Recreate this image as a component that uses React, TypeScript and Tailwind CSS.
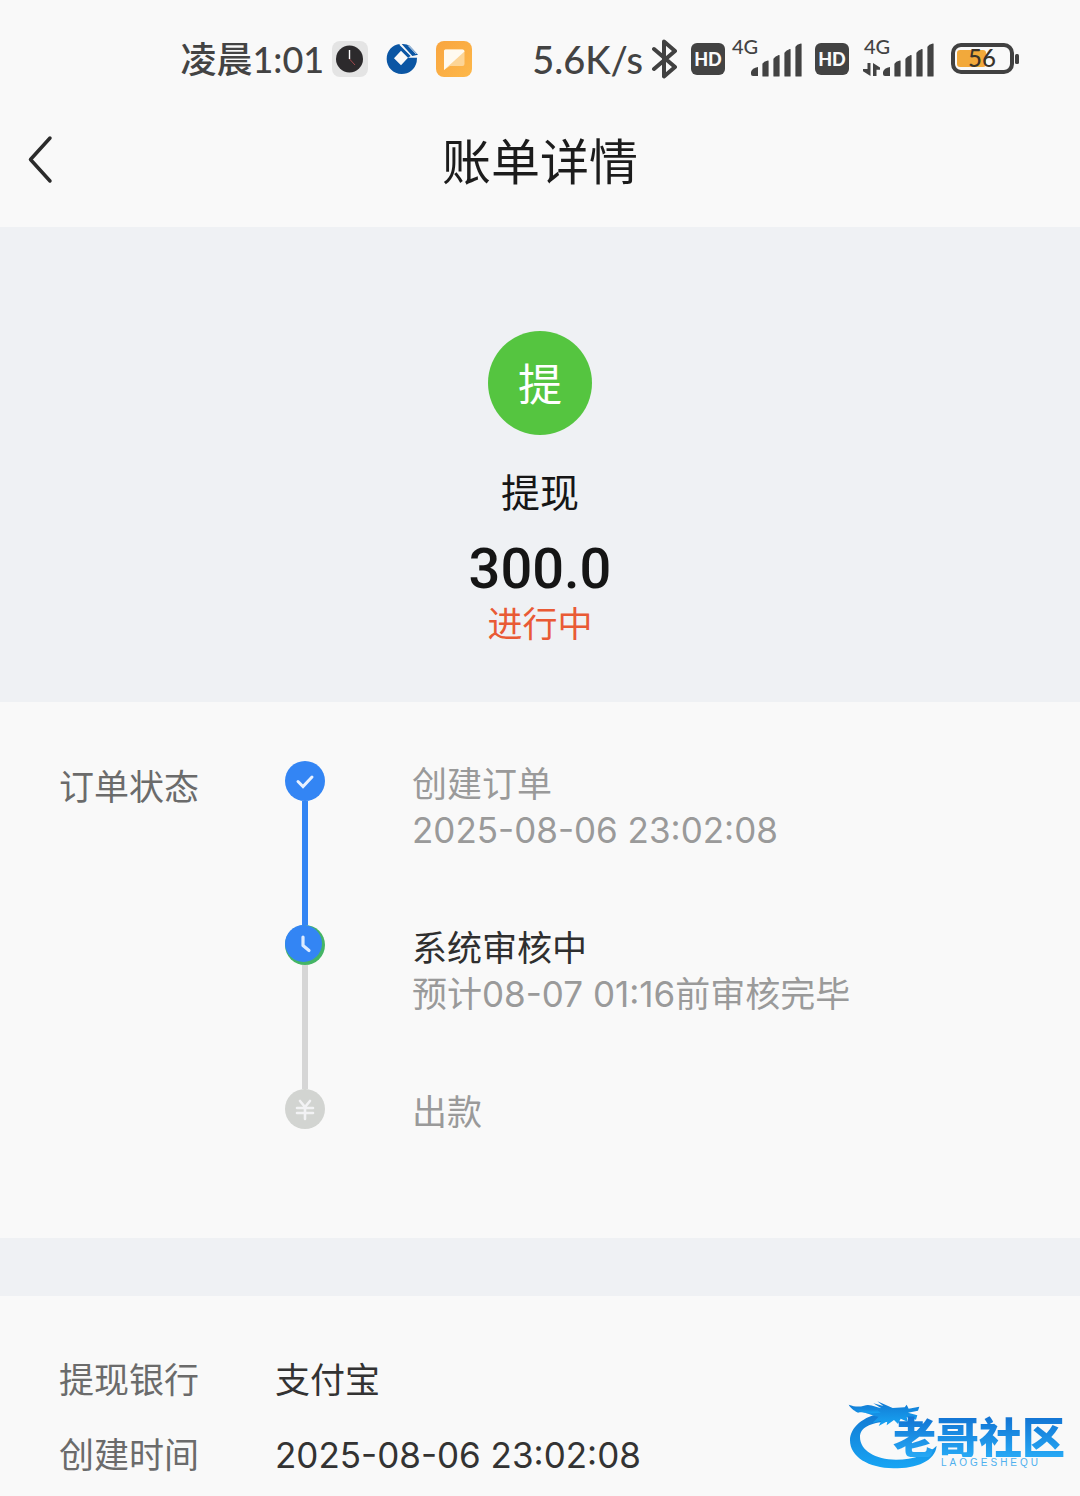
import type { ReactNode } from "react";

const cjk = "font-['Inter','Noto_Sans_CJK_SC',sans-serif]";
const statusFont = "font-['Lato','Noto_Sans_CJK_SC',sans-serif]";

function ClockAppIcon() {
  return (
    <svg className="size-9" viewBox="0 0 36 36" aria-hidden="true">
      <rect width="36" height="36" rx="8" fill="#e4e4e4" />
      <circle cx="17.5" cy="18" r="13.5" fill="#2c2a2c" />
      <path d="M17.5 9v9" stroke="#fff" strokeWidth="1.4" />
      <path d="M17.5 18l5.5 6" stroke="#a0484c" strokeWidth="1" />
    </svg>
  );
}

function BankAppIcon() {
  return (
    <svg className="size-8" viewBox="10 14 96 96" aria-hidden="true">
      <path
        d="M52 17C28 19 12 38 12 62c0 25 20 45 45 45 22 0 40-14 45-36l1-13H76L55 81 34 60l21-23 21 21 8-5L50 19z"
        fill="#0b56a4"
      />
      <path d="M57 17q14-1 24 5l25 27-17 4z" fill="#0b56a4" />
      <path d="M77 22l24 25" stroke="#f9f9f9" strokeWidth="3" />
    </svg>
  );
}

function NoteAppIcon() {
  return (
    <svg className="size-9" viewBox="0 0 36 36" aria-hidden="true">
      <defs>
        <linearGradient id="note" x1="0" y1="0" x2="1" y2="1">
          <stop offset="0" stopColor="#f9a53f" />
          <stop offset="1" stopColor="#fdb84a" />
        </linearGradient>
      </defs>
      <rect width="36" height="36" rx="8" fill="url(#note)" />
      <path d="M9.5 8.500h17a2 2 0 0 1 2 2V23a2 2 0 0 1-2 2H14l-6 4V10a1.500 1.500 0 0 1 1.500-1.500z" fill="#fdd596" />
      <path d="M9.500 8.500h17a2 2 0 0 1 2 2L8 29V10a1.500 1.500 0 0 1 1.500-1.500z" fill="#fffaf0" />
    </svg>
  );
}

function BluetoothIcon() {
  return (
    <svg className="h-10 w-7" viewBox="0 0 28 40" aria-hidden="true">
      <path
        d="M3 10l21 18-11 9.500V2.500L24 12 3 30"
        fill="none"
        stroke="#414141"
        strokeWidth="4"
        strokeLinejoin="round"
        strokeLinecap="round"
      />
    </svg>
  );
}

function HdBadge() {
  return (
    <span className="flex h-8 w-[34px] items-center justify-center rounded-md bg-[#434343] font-['Lato',sans-serif] text-lg font-black leading-none text-[#fafafa]">
      HD
    </span>
  );
}

function Signal({ data = false }: { data?: boolean }) {
  return (
    <svg className="h-[52px] w-[72px]" viewBox="0 -4 72 52" fill="#434343" role="img" aria-label="4G">
      <text x="1" y="17" fontSize="20" fontFamily="Lato, sans-serif" fontWeight="500">
        4G
      </text>
      {data && (
        <path d="M4.500 26h3v13L0 34.200v-2.200h4.500zM10 26l7 4.500v2.300h-3.500V39H10z" />
      )}
      <path d="M20 37v-2q1-4 7-5v9h-5q-2 0-2-2z" />
      <path
        d="M32 27q1-2 5-3v15h-5zM43 22q1-2 5-3.500V39h-5zM54 16q1-2 5-3.500V39h-5zM65 10q1-2 5-3v32h-5z"
        stroke="#434343"
        strokeWidth="1.200"
        strokeLinejoin="round"
      />
    </svg>
  );
}

function Battery() {
  return (
    <svg className="h-8 w-[70px]" viewBox="0 0 70 32" role="img" aria-label="56">
      <rect x="2" y="2" width="59" height="27" rx="8" fill="none" stroke="#414141" strokeWidth="4" />
      <rect x="6" y="7" width="29" height="17" rx="3" fill="#f2a93b" />
      <rect x="64" y="11" width="4" height="10" rx="1.500" fill="#414141" />
      <text x="31" y="24" textAnchor="middle" fontSize="24" fontFamily="Lato, sans-serif" fontWeight="500" fill="#3a332a">
        56
      </text>
    </svg>
  );
}

function StatusBar() {
  return (
    <div className={`flex h-[118px] items-center justify-end pr-[59px] font-medium leading-none text-[#434343] ${statusFont}`}>
      <span className="mr-2 whitespace-nowrap text-[36px]">凌晨1:01</span>
      <ClockAppIcon />
      <span className="mx-[18px]">
        <BankAppIcon />
      </span>
      <NoteAppIcon />
      <span className="ml-15 mr-2 whitespace-nowrap text-[38px]">5.6K/s</span>
      <BluetoothIcon />
      <span className="ml-3 mr-3 flex items-center gap-1.5">
        <HdBadge />
        <Signal />
      </span>
      <span className="mr-4 flex items-center gap-3.5">
        <HdBadge />
        <Signal data />
      </span>
      <Battery />
    </div>
  );
}

function DoneNode() {
  return (
    <svg className="size-10 shrink-0" viewBox="0 0 40 40" aria-hidden="true">
      <circle cx="20" cy="20" r="20" fill="#3385f4" />
      <path d="M13 20.500l5 5 9-9.500" fill="none" stroke="#e8f2ff" strokeWidth="3" strokeLinecap="round" />
    </svg>
  );
}

function ActiveNode() {
  return (
    <svg className="size-10 shrink-0" viewBox="0 0 40 40" aria-hidden="true">
      <circle cx="20" cy="20" r="20" fill="#45b565" />
      <circle cx="18.500" cy="18.500" r="18.500" fill="#3385f4" />
      <path d="M18 12v8.500l6 5" fill="none" stroke="#dcebff" strokeWidth="3.200" strokeLinecap="round" strokeLinejoin="round" />
    </svg>
  );
}

function PayoutNode() {
  return (
    <svg className="size-10 shrink-0" viewBox="0 0 40 40" aria-hidden="true">
      <circle cx="20" cy="20" r="20" fill="#d2d4d1" />
      <path d="M15 12l5 6 5-6M12 19h16M12 24h16M20 18v12" fill="none" stroke="#f2f2f4" strokeWidth="2.600" strokeLinecap="round" />
    </svg>
  );
}

type StepProps = { icon: ReactNode; line?: string; title: string; titleColor: string; note?: string };

function Step({ icon, line, title, titleColor, note }: StepProps) {
  return (
    <li className={line ? "flex min-h-[164px]" : "flex"}>
      <div className="flex w-10 shrink-0 flex-col items-center">
        {icon}
        {line && <div className={`w-1.5 flex-1 ${line}`} />}
      </div>
      <div className="ml-[87px] text-[35px] leading-[46px]">
        <p className={titleColor}>{title}</p>
        {note && <p className="text-[#9a9a9a]">{note}</p>}
      </div>
    </li>
  );
}

function Detail({ label, value }: { label: string; value: string }) {
  return (
    <div className="flex text-[35px] leading-[75px]">
      <dt className="w-[216px] shrink-0 text-[#6b6b6b]">{label}</dt>
      <dd className="text-[#333]">{value}</dd>
    </div>
  );
}

function CommunityLogo() {
  return (
    <div className="absolute right-4 top-[100px] flex" aria-label="老哥社区">
      <svg className="h-[76px] w-[100px]" viewBox="0 0 300 228" aria-hidden="true">
        <defs>
          <linearGradient id="dragon" x1="0" y1="0" x2="0" y2="1">
            <stop offset="0" stopColor="#1279d2" />
            <stop offset="1" stopColor="#18a5f4" />
          </linearGradient>
        </defs>
        <g fill="url(#dragon)">
          <path d="M112 50C50 60 12 95 12 133c0 50 56 83 130 84 72 0 125-22 130-68-24 26-68 42-122 42-62 0-108-28-108-68 0-28 30-44 84-46l-8-16z" />
          <path d="M8 26c18 6 30 8 46 3 20-6 38 6 52 8L82 22l30 8-18-14 46 20 36-2 6-8 6 12 32-6-4 12-30 6 28 8-4 13-28-7 4 14-22-10-8 16-12-12-22 16 2-12-26 14 8-16-26 6 18-18c-30-4-40-18-62-12C30 47 14 38 8 26z" />
          <path d="M20 32c20 18 52 22 84 18l-10-8c-30 2-52-2-74-10z" />
        </g>
      </svg>
      <div className="-ml-[53px] mt-[17px] font-['Noto_Sans_CJK_SC',sans-serif]">
        <p className="-mr-px bg-linear-to-b from-[#126fd0] to-[#27a9f5] bg-clip-text text-[43px] font-black leading-[44px] text-transparent">
          老哥社区
        </p>
        <p className="pl-[48px] font-['Liberation_Sans',sans-serif] text-[10px] leading-3 tracking-[3px] text-[#4fb0ee]">
          LAOGESHEQU
        </p>
      </div>
    </div>
  );
}

export default function App() {
  return (
    <div className={`min-h-screen bg-[#f9f9f9] ${cjk}`}>
      <header>
        <StatusBar />
        <div className="relative flex h-[109px] items-start justify-center">
          <button type="button" aria-label="返回" className="absolute left-6 top-4">
            <svg className="h-13 w-8" viewBox="0 0 32 52" aria-hidden="true">
              <path d="M26 4L6.500 25.500 26 47" fill="none" stroke="#2b2b2b" strokeWidth="3.500" strokeLinecap="round" strokeLinejoin="round" />
            </svg>
          </button>
          <h1 className="pt-2.5 text-[49px] leading-[70px] text-[#1c1c1c]">账单详情</h1>
        </div>
      </header>
      <main>
        <section className="flex flex-col items-center bg-[#eff1f4] pb-14 pt-[104px]">
          <div className="flex size-26 items-center justify-center rounded-full bg-[#55c540] pt-1 text-[44px] text-white">提</div>
          <h2 className="mt-8 text-[39px] leading-[52px] text-[#161616]">提现</h2>
          <p className="mt-4 font-['Roboto',sans-serif] text-[56px] font-medium leading-[68px] text-[#151515]">300.0</p>
          <p className="text-[35px] leading-[43px] text-[#e95a35]">进行中</p>
        </section>
        <section className="flex px-[59px] pb-[103px] pt-[59px]">
          <h3 className="w-[226px] shrink-0 text-[35px] leading-[52px] text-[#6b6b6b]">订单状态</h3>
          <ol>
            <Step icon={<DoneNode />} line="bg-[#3385f4]" title="创建订单" titleColor="text-[#9a9a9a]" note="2025-08-06 23:02:08" />
            <Step icon={<ActiveNode />} line="bg-[#d6d6d6]" title="系统审核中" titleColor="text-[#2f2f2f]" note="预计08-07 01:16前审核完毕" />
            <Step icon={<PayoutNode />} title="出款" titleColor="text-[#9a9a9a]" />
          </ol>
        </section>
        <div className="h-[58px] bg-[#eff1f4]" />
        <section className="relative px-[59px] pt-[47px]">
          <dl>
            <Detail label="提现银行" value="支付宝" />
            <Detail label="创建时间" value="2025-08-06 23:02:08" />
          </dl>
          <CommunityLogo />
        </section>
      </main>
    </div>
  );
}
